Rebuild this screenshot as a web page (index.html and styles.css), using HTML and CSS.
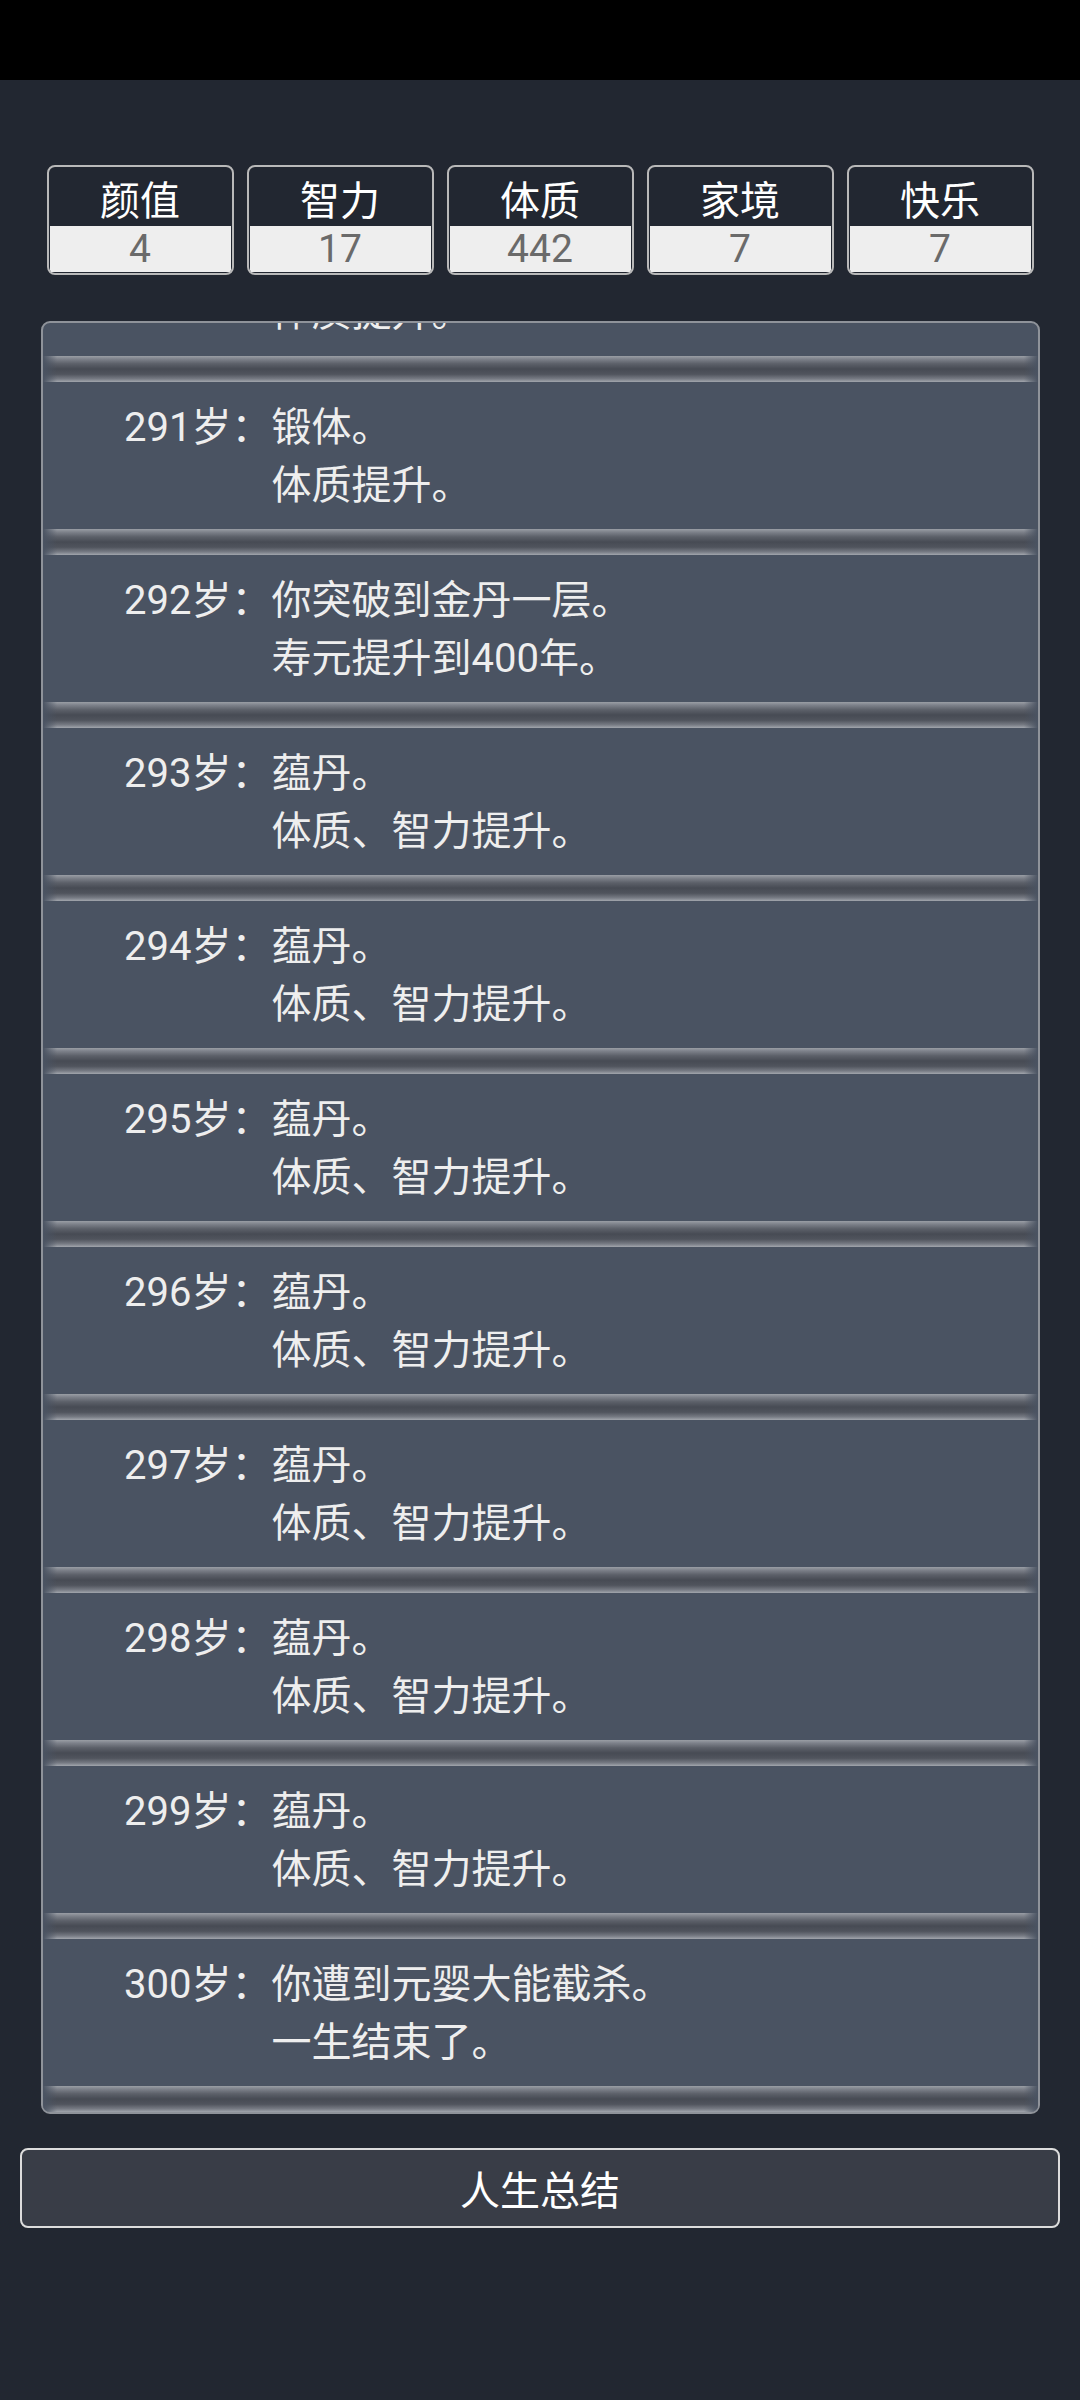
FILE: index.html
```html
<!DOCTYPE html>
<html lang="zh-CN">
<head>
    <meta charset="UTF-8">
    <meta name="viewport" content="width=device-width, initial-scale=1.0">
    <title>人生重开</title>
    <link rel="stylesheet" href="styles.css">
</head>
<body>
    <div class="statusbar"></div>

    <div class="stats">
        <div class="stat"><div class="stat-label">颜值</div><div class="stat-value">4</div></div>
        <div class="stat"><div class="stat-label">智力</div><div class="stat-value">17</div></div>
        <div class="stat"><div class="stat-label">体质</div><div class="stat-value">442</div></div>
        <div class="stat"><div class="stat-label">家境</div><div class="stat-value">7</div></div>
        <div class="stat"><div class="stat-label">快乐</div><div class="stat-value">7</div></div>
    </div>

    <div class="log">
        <ul class="log-list">
            <li class="entry"><span class="age">290岁：</span><span class="text">锻体。<br>体质提升。</span></li>
            <li class="entry"><span class="age">291岁：</span><span class="text">锻体。<br>体质提升。</span></li>
            <li class="entry"><span class="age">292岁：</span><span class="text">你突破到金丹一层。<br>寿元提升到400年。</span></li>
            <li class="entry"><span class="age">293岁：</span><span class="text">蕴丹。<br>体质、智力提升。</span></li>
            <li class="entry"><span class="age">294岁：</span><span class="text">蕴丹。<br>体质、智力提升。</span></li>
            <li class="entry"><span class="age">295岁：</span><span class="text">蕴丹。<br>体质、智力提升。</span></li>
            <li class="entry"><span class="age">296岁：</span><span class="text">蕴丹。<br>体质、智力提升。</span></li>
            <li class="entry"><span class="age">297岁：</span><span class="text">蕴丹。<br>体质、智力提升。</span></li>
            <li class="entry"><span class="age">298岁：</span><span class="text">蕴丹。<br>体质、智力提升。</span></li>
            <li class="entry"><span class="age">299岁：</span><span class="text">蕴丹。<br>体质、智力提升。</span></li>
            <li class="entry"><span class="age">300岁：</span><span class="text">你遭到元婴大能截杀。<br>一生结束了。</span></li>
        </ul>
    </div>

    <button class="summary">人生总结</button>
</body>
</html>
```

FILE: styles.css
```css
body {
    margin: 0;
    background-color: #222731;
    font-family: Roboto, "Noto Sans CJK SC", sans-serif;
    color: #eeeeee;
}
.statusbar {
    height: 80px;
    background-color: #000;
}
.stats {
    display: flex;
    justify-content: center;
    gap: 13px;
    margin-top: 85px;
}
.stat {
    width: 187px;
    height: 110px;
    box-sizing: border-box;
    border: 2px solid #b9b9b9;
    border-radius: 8px;
    overflow: hidden;
    display: flex;
    flex-direction: column;
    padding: 0 1px 1px;
}
.stat-label {
    height: 59px;
    display: flex;
    align-items: center;
    justify-content: center;
    padding-top: 2px;
    box-sizing: border-box;
    font-size: 40px;
    color: #fff;
}
.stat-value {
    height: 46px;
    line-height: 46px;
    text-align: center;
    background-color: #eeeeee;
    color: #6a6a6a;
    font-size: 39px;
}
.log {
    width: 999px;
    height: 1793px;
    box-sizing: border-box;
    margin: 46px auto 0;
    border: 2px solid #8f939a;
    border-radius: 9px;
    background-color: #4a5362;
    overflow: hidden;
}
.log-list {
    list-style: none;
    margin: -114px 0 0;
    padding: 0;
}
.entry {
    display: flex;
    flex-wrap: wrap;
    font-size: 40px;
    line-height: 58px;
}
.entry .age {
    width: 229px;
    text-align: right;
    padding-top: 17px;
}
.entry .text {
    flex: 1;
    padding: 17px 0 14px;
}
.entry::after {
    content: "";
    flex-basis: 100%;
    height: 26px;
    background:
        linear-gradient(to right, #4a5362, rgba(74, 83, 98, 0) 14px, rgba(74, 83, 98, 0) calc(100% - 14px), #4a5362),
        linear-gradient(#9a9ea5, #7d818a 12%, #5c6069 30%, #474b54 50%, #50545d 70%, #777b84 88%, #a2a6ad);
}
.summary {
    display: block;
    width: 1040px;
    height: 80px;
    margin: 34px auto 0;
    background-color: #393d47;
    border: 2px solid #dddddd;
    border-radius: 8px;
    color: #fff;
    font-family: Roboto, "Noto Sans CJK SC", sans-serif;
    font-size: 40px;
    cursor: pointer;
}
```
